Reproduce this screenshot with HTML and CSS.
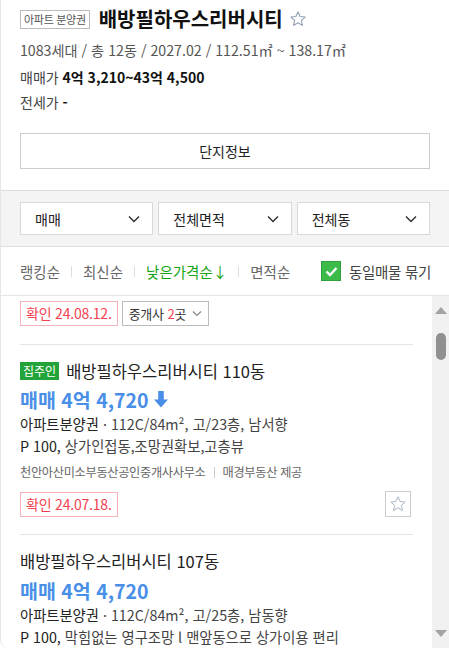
FILE: index.html
```html
<!DOCTYPE html>
<html lang="ko">
<head>
<meta charset="utf-8">
<title>배방필하우스리버시티</title>
<link rel="stylesheet" href="styles.css">
</head>
<body>
<div class="page">
  <header class="summary">
    <div class="title-row">
      <span class="tag">아파트 분양권</span>
      <h1 class="title">배방필하우스리버시티</h1>
      <svg class="title-star" width="18" height="18" viewBox="0 0 24 24"><polygon points="12,2.5 14.9,8.7 21.5,9.4 16.5,13.9 17.9,20.5 12,17.1 6.1,20.5 7.5,13.9 2.5,9.4 9.1,8.7" fill="none" stroke="#8f9db3" stroke-width="1.4" stroke-linejoin="round"/></svg>
    </div>
    <p class="meta">1083세대 / 총 12동 / 2027.02 / 112.51㎡ ~ 138.17㎡</p>
    <p class="price-line first"><span class="label">매매가</span> <b>4억 3,210~43억 4,500</b></p>
    <p class="price-line"><span class="label">전세가</span> <b>-</b></p>
    <button class="info-btn" type="button">단지정보</button>
  </header>

  <div class="filters">
    <div class="select"><span>매매</span><svg width="12" height="8" viewBox="0 0 12 8"><polyline points="1,1.5 6,6.5 11,1.5" fill="none" stroke="#333" stroke-width="1.5"/></svg></div>
    <div class="select"><span>전체면적</span><svg width="12" height="8" viewBox="0 0 12 8"><polyline points="1,1.5 6,6.5 11,1.5" fill="none" stroke="#333" stroke-width="1.5"/></svg></div>
    <div class="select"><span>전체동</span><svg width="12" height="8" viewBox="0 0 12 8"><polyline points="1,1.5 6,6.5 11,1.5" fill="none" stroke="#333" stroke-width="1.5"/></svg></div>
  </div>

  <div class="sort">
    <div class="sort-list">
      <span class="sort-item">랭킹순</span>
      <span class="sep"></span>
      <span class="sort-item">최신순</span>
      <span class="sep"></span>
      <span class="sort-item active">낮은가격순↓</span>
      <span class="sep"></span>
      <span class="sort-item">면적순</span>
    </div>
    <label class="group">
      <span class="check"><svg width="13" height="11" viewBox="0 0 13 11"><polyline points="1.5,5.5 5,9 11.5,2" fill="none" stroke="#fff" stroke-width="2.4"/></svg></span>
      <span>동일매물 묶기</span>
    </label>
  </div>

  <div class="list-wrap">
    <div class="list">
      <div class="top-row">
        <span class="confirm">확인 24.08.12.</span>
        <span class="broker">중개사 <em>2</em>곳<svg width="10" height="7" viewBox="0 0 10 7"><polyline points="1,1.5 5,5.5 9,1.5" fill="none" stroke="#888" stroke-width="1.2"/></svg></span>
      </div>

      <div class="item">
        <div class="item-title"><span class="owner">집주인</span>배방필하우스리버시티 110동</div>
        <div class="item-price">매매 4억 4,720<svg class="down" width="14" height="17" viewBox="0 0 14 17"><polygon points="4.2,0 9.8,0 9.8,8.5 14,8.5 7,16.5 0,8.5 4.2,8.5" fill="#4a8fe7"/></svg></div>
        <div class="item-desc"><span class="type">아파트분양권</span> · 112C/84m², 고/23층, 남서향</div>
        <div class="item-desc"><span class="type">P 100,</span> 상가인접동,조망권확보,고층뷰</div>
        <div class="agent">천안아산미소부동산공인중개사사무소<span class="agent-sep"></span>매경부동산 제공</div>
        <div class="item-bottom">
          <span class="confirm">확인 24.07.18.</span>
          <button class="fav" type="button"><svg width="18" height="18" viewBox="0 0 24 24"><polygon points="12,2.5 14.9,8.7 21.5,9.4 16.5,13.9 17.9,20.5 12,17.1 6.1,20.5 7.5,13.9 2.5,9.4 9.1,8.7" fill="none" stroke="#a9b3c4" stroke-width="1.3" stroke-linejoin="round"/></svg></button>
        </div>
      </div>

      <div class="item">
        <div class="item-title">배방필하우스리버시티 107동</div>
        <div class="item-price second">매매 4억 4,720</div>
        <div class="item-desc"><span class="type">아파트분양권</span> · 112C/84m², 고/25층, 남동향</div>
        <div class="item-desc"><span class="type">P 100,</span> 막힘없는 영구조망 l 맨앞동으로 상가이용 편리</div>
      </div>
    </div>
    <div class="scrollbar">
      <span class="arrow-up"></span>
      <span class="thumb"></span>
      <span class="arrow-down"></span>
    </div>
  </div>
</div>
</body>
</html>
```

FILE: styles.css
```css
* { box-sizing: border-box; }

body {
  margin: 0;
  font-family: "Noto Sans CJK KR", "Noto Sans", sans-serif;
  color: #222;
  background: #fff;
}

.page {
  width: 449px;
  height: 648px;
  overflow: hidden;
  border-left: 1px solid #e6e6e6;
  border-bottom-left-radius: 8px;
  display: flex;
  flex-direction: column;
}

/* summary */
.summary {
  padding: 8px 19px 21px 19px;
}

.title-row {
  display: flex;
  align-items: center;
  height: 22px;
}

.tag {
  display: inline-block;
  height: 19px;
  line-height: 17px;
  border: 1px solid #bbb;
  padding: 0 3px;
  font-size: 11px;
  color: #555;
  letter-spacing: -0.3px;
}

.title {
  margin: 0 0 0 9px;
  font-size: 20px;
  line-height: 22px;
  font-weight: 700;
  color: #111;
}

.title-star {
  margin-left: 6px;
}

.meta {
  margin: 0;
  margin-top: 8px;
  font-size: 14.2px;
  line-height: 24px;
  color: #555;
}

.price-line {
  margin: 0;
  font-size: 14px;
  line-height: 26px;
  color: #444;
}

.price-line.first {
  margin-top: 2px;
}

.price-line + .price-line {
  line-height: 24px;
}

.price-line b {
  color: #111;
}

.info-btn {
  display: block;
  width: 100%;
  height: 36px;
  margin-top: 19px;
  border: 1px solid #ccc;
  background: #fff;
  font-family: inherit;
  font-size: 14px;
  color: #222;
}

/* filters */
.filters {
  display: flex;
  gap: 5px;
  background: #f4f4f4;
  border-top: 1px solid #ddd;
  border-bottom: 1px solid #ddd;
  padding: 11px 19px 11px 19px;
}

.select {
  flex: 1;
  height: 33px;
  background: #fff;
  border: 1px solid #d8d8d8;
  display: flex;
  align-items: center;
  justify-content: space-between;
  padding: 0 12px 0 14px;
  font-size: 14px;
  color: #222;
}

/* sort */
.sort {
  height: 49px;
  flex-shrink: 0;
  border-bottom: 1px solid #e5e5e5;
  display: flex;
  align-items: center;
  padding: 0 18px 0 19px;
}

.sort-list {
  display: flex;
  align-items: center;
  gap: 11px;
}

.sort-item {
  font-size: 14.5px;
  color: #666;
}

.sort-item.active {
  color: #14a614;
}

.sep {
  width: 1px;
  height: 11px;
  background: #ddd;
}

.group {
  margin-left: auto;
  display: flex;
  align-items: center;
  gap: 8px;
  font-size: 14.5px;
  color: #444;
  letter-spacing: -0.3px;
}

.check {
  width: 20px;
  height: 20px;
  background: #3cba4a;
  border: 1px solid #2fa03b;
  display: flex;
  align-items: center;
  justify-content: center;
}

/* list */
.list-wrap {
  flex: 1;
  min-height: 0;
  display: flex;
}

.list {
  flex: 1;
  padding: 5px 19px 0 19px;
  overflow: hidden;
}

.top-row {
  display: flex;
  gap: 4px;
  padding-bottom: 18px;
  border-bottom: 1px solid #e5e5e5;
}

.confirm {
  display: inline-block;
  height: 25px;
  line-height: 23px;
  border: 1px solid #f6b3ba;
  padding: 0 5px;
  font-size: 14px;
  color: #f5414f;
  letter-spacing: -0.2px;
}

.broker {
  display: inline-flex;
  align-items: center;
  height: 25px;
  border: 1px solid #bbb;
  padding: 0 6px;
  font-size: 13px;
  color: #333;
  letter-spacing: -0.3px;
}

.broker em {
  font-style: normal;
  color: #f5414f;
  margin-left: 4px;
}

.broker svg {
  margin-left: 6px;
}

.item {
  padding: 17px 0 17px 0;
  border-bottom: 1px solid #e5e5e5;
}

.item-title {
  display: flex;
  align-items: center;
  height: 18px;
  font-size: 16.5px;
  color: #222;
}

.owner {
  display: inline-block;
  height: 18px;
  line-height: 18px;
  padding: 0 3px;
  background: #23a43a;
  color: #fff;
  font-size: 12px;
  margin-right: 7px;
}

.item-price {
  display: flex;
  align-items: center;
  margin-top: 5px;
  height: 28px;
  font-size: 19.5px;
  font-weight: 700;
  color: #4a8fe7;
}

.item-price.second {
  margin-top: 6px;
}

.down {
  margin-left: 5px;
}

.item-desc {
  font-size: 14.3px;
  line-height: 22px;
  color: #444;
}

.item-desc .type {
  color: #222;
}

.agent {
  margin-top: 4px;
  font-size: 12.2px;
  line-height: 22px;
  color: #666;
  letter-spacing: -0.3px;
  display: flex;
  align-items: center;
}

.agent-sep {
  display: inline-block;
  width: 1px;
  height: 11px;
  background: #ccc;
  margin: 0 8px;
}

.item-bottom {
  margin-top: 8px;
  display: flex;
  align-items: center;
  justify-content: space-between;
}

.fav {
  width: 26px;
  height: 26px;
  margin-right: 2px;
  border: 1px solid #ccc;
  background: #fff;
  padding: 0;
  display: flex;
  align-items: center;
  justify-content: center;
}

/* fake scrollbar */
.scrollbar {
  width: 17px;
  flex-shrink: 0;
  background: #f1f1f1;
  display: flex;
  flex-direction: column;
  align-items: center;
}

.arrow-up {
  margin-top: 11px;
  width: 0;
  height: 0;
  border-left: 6px solid transparent;
  border-right: 6px solid transparent;
  border-bottom: 7px solid #a3a3a3;
}

.thumb {
  margin-top: 19px;
  width: 10px;
  height: 27px;
  border-radius: 5px;
  background: #909090;
}

.arrow-down {
  margin-top: auto;
  margin-bottom: 11px;
  width: 0;
  height: 0;
  border-left: 6px solid transparent;
  border-right: 6px solid transparent;
  border-top: 7px solid #a3a3a3;
}
```
